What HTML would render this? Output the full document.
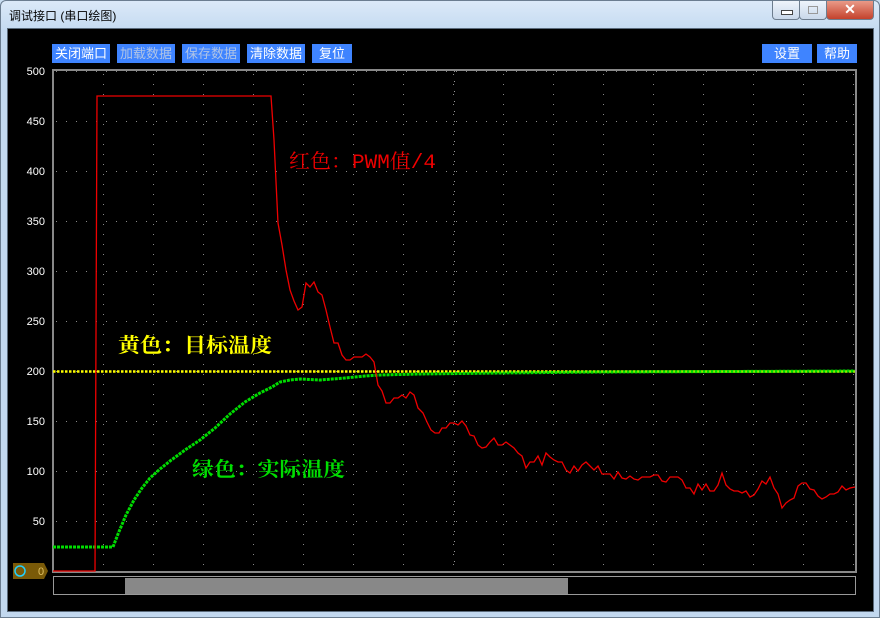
<!DOCTYPE html>
<html><head><meta charset="utf-8"><style>
body{margin:0;width:880px;height:618px;overflow:hidden;background:#c9def2;font-family:"Liberation Sans","Noto Sans CJK SC",sans-serif}
.frame{position:absolute;left:0;top:0;width:878px;height:616px;border:1px solid #6b7d90;border-radius:6px 6px 0 0;background:linear-gradient(#dbe9f8,#c4daf1 30px,#c2d8ef)}
.title{position:absolute;left:9px;top:7px;font-size:12px;color:#000}
.inner{position:absolute;left:7px;top:28px;width:865px;height:582px;background:#000;border:1px solid #5b6b7c}
.btn{position:absolute;top:44px;height:19px;background:#3f84ff;color:#fff;font-size:13px;line-height:19px;text-align:center}
.dis{color:#b0c4e6}
.wb{position:absolute;top:1px;height:18px;border:1px solid #6d7d8e;border-top:none;border-radius:0 0 4px 4px}
</style></head><body>
<div class="frame"></div>
<div class="title">调试接口 (串口绘图)</div>
<div class="wb" style="left:772px;width:26px;background:linear-gradient(#eef4fb,#c9d8ea)"><div style="position:absolute;left:8px;top:9px;width:10px;height:3px;background:#fff;border:1px solid #444"></div></div>
<div class="wb" style="left:799px;width:26px;background:linear-gradient(#eef4fb,#c9d8ea)"><div style="position:absolute;left:8px;top:5px;width:8px;height:6px;border:1px solid #999"></div></div>
<div class="wb" style="left:826px;width:46px;background:linear-gradient(#e99a88,#c4422c);color:#fff;font-weight:bold;font-size:14px;text-align:center;line-height:17px">✕</div>
<div class="inner"></div>
<div class="btn" style="left:52px;width:58px">关闭端口</div>
<div class="btn dis" style="left:117px;width:58px">加载数据</div>
<div class="btn dis" style="left:182px;width:58px">保存数据</div>
<div class="btn" style="left:247px;width:58px">清除数据</div>
<div class="btn" style="left:312px;width:40px">复位</div>
<div class="btn" style="left:762px;width:50px">设置</div>
<div class="btn" style="left:817px;width:40px">帮助</div>
<svg width="880" height="618" style="position:absolute;left:0;top:0" xmlns="http://www.w3.org/2000/svg">
<defs><pattern id="g" x="53" y="71" width="50" height="50" patternUnits="userSpaceOnUse">
<line x1="0" y1="0" x2="50" y2="0" stroke="#888" stroke-width="1" stroke-dasharray="1 9" transform="translate(3,0.5)"/>
<line x1="0.5" y1="0" x2="0.5" y2="50" stroke="#888" stroke-dasharray="1 9" transform="translate(0,3)"/>
</pattern></defs>
<rect x="53" y="71" width="802" height="501" fill="url(#g)"/>
<line x1="454.5" y1="71" x2="454.5" y2="572" stroke="#999" stroke-dasharray="1 9"/>
<rect x="53" y="70" width="803" height="502" fill="none" stroke="#888" stroke-width="2"/>
<g font-size="11" fill="#fff" text-anchor="end" font-family="Liberation Sans">
<text x="45" y="75">500</text><text x="45" y="125">450</text><text x="45" y="175">400</text><text x="45" y="225">350</text><text x="45" y="275">300</text><text x="45" y="325">250</text><text x="45" y="375">200</text><text x="45" y="425">150</text><text x="45" y="475">100</text><text x="45" y="525">50</text></g>
<polyline fill="none" stroke="#ffff00" stroke-width="2.5" stroke-dasharray="2.5 1.5" points="53,371.5 855,371.5"/>
<polyline fill="none" stroke="#00dd00" stroke-width="3" stroke-dasharray="3 1" points="53,547 113,547 118,534 126,515 134,500 142,488 150,478 160,469 170,461 185,450 200,440 215,428 230,414 245,402 260,393 272,387 280,382 290,380 300,379 320,380 345,378 365,376 380,375 420,374 500,373 600,372 855,371"/>
<polyline fill="none" stroke="#ee0000" stroke-width="1.3" points="53,571 95,571 97,96 271,96 274,140 278,223 282,245 286,270 290,290 294,301 298,310 302,307 306,283 310,287 314,282 318,292 322,295 326,310 330,327 334,343 338,343 342,355 346,360 350,360 354,357 358,357 362,357 366,354 370,357 374,362 378,385 382,391 386,403 390,403 394,398 398,398 402,395 406,398 410,392 414,395 418,408 420,410 423,413 427,422 431,430 435,433 439,433 442,428 446,428 450,423 454,423 458,425 462,421 466,426 470,435 474,436 478,445 482,448 486,447 490,442 494,438 498,445 502,445 506,442 510,445 514,448 518,453 522,456 526,468 530,462 534,462 538,456 542,465 546,453 550,457 554,460 558,462 562,462 566,470 570,473 574,466 578,471 582,465 586,462 590,466 594,470 598,466 602,474 606,474 610,474 614,479 618,472 622,478 626,479 630,476 634,479 638,480 642,477 646,477 650,477 654,475 658,475 662,481 666,482 670,477 674,477 678,477 682,480 686,488 690,488 694,494 698,484 702,490 706,484 710,491 714,491 718,485 722,473 726,485 730,489 734,491 738,491 742,493 746,491 750,497 754,495 758,489 762,481 766,484 770,477 774,488 778,494 782,508 786,503 790,500 794,498 798,486 802,483 806,483 810,489 814,490 818,496 822,499 826,497 830,494 834,494 838,492 842,486 846,490 850,488 855,487"/>
<g font-family="'Noto Serif CJK SC',serif" font-size="20">
<text x="289" y="168" fill="#ee0000" textLength="147" lengthAdjust="spacingAndGlyphs" font-family="'Liberation Mono','Noto Serif CJK SC',monospace">红色：PWM值/4</text>
<text x="118" y="352" fill="#ffff00" font-weight="bold" textLength="154" lengthAdjust="spacingAndGlyphs">黄色：目标温度</text>
<text x="192" y="476" fill="#00dd00" font-weight="bold" textLength="153" lengthAdjust="spacingAndGlyphs">绿色：实际温度</text></g>
<path d="M13,563 H44 L48,571 L44,579 H13 Z" fill="#7a5a08"/>
<circle cx="20" cy="571" r="5" fill="none" stroke="#22d0ff" stroke-width="1.5"/>
<text x="38" y="575" font-size="11" fill="#e0c060">0</text>
<rect x="53.5" y="576.5" width="802" height="18" fill="none" stroke="#999"/>
<rect x="125" y="578" width="443" height="16" fill="#888"/>
</svg>
</body></html>
